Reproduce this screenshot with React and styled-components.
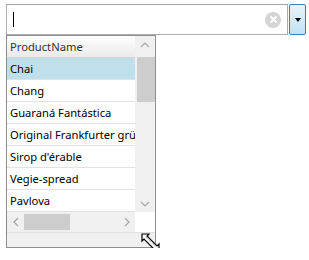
import styled, { createGlobalStyle } from "styled-components"

const Global = createGlobalStyle`
body{
margin:0;
background:#fff;
font-family:"Noto Sans","Open Sans",sans-serif;
}
`

const Page = styled.div`
padding:4px 0 0 6px;
`

const Combo = styled.div`
display:flex;
gap:1px;
height:31px;
width:300px;
`

const Input = styled.div`
flex:1;
box-sizing:border-box;
border:1px solid #abadb3;
border-top-color:#9fa3ab;
background:#fff;
display:flex;
align-items:center;
padding:0 6px;
`

const Caret = styled.span`
width:1px;
height:15px;
background:#000;
`

const Clear = styled.div`
margin-left:auto;
width:16px;
height:16px;
border-radius:50%;
background:#d4d4d4;
display:flex;
align-items:center;
justify-content:center;
`

const DropButton = styled.div`
width:17px;
box-sizing:border-box;
border:1px solid #3c7fb1;
border-radius:2px;
background:linear-gradient(#e6f4fc,#c0e3f7);
display:flex;
align-items:center;
justify-content:center;
`

const Arrow = styled.span`
width:0;
height:0;
border-left:3px solid transparent;
border-right:3px solid transparent;
border-top:4px solid #000;
`

const Panel = styled.div`
position:relative;
width:150px;
box-sizing:border-box;
border:1px solid #8e8e8e;
display:grid;
grid-template-columns:128px 20px;
grid-template-rows:176px 20px 15px;
`

const List = styled.div`
overflow:hidden;
`

const Header = styled.div`
height:22px;
box-sizing:border-box;
border-bottom:1px solid #d5d5d5;
background:linear-gradient(#fff,#eaeaea);
color:#333;
font-size:11.2px;
line-height:22px;
padding-left:3px;
white-space:nowrap;
`

const Row = styled.div`
height:22px;
box-sizing:border-box;
border-bottom:1px solid #e2e2e2;
background:${(p) => (p.selected ? "#bfe0ea" : "#fff")};
color:#000;
font-size:11.2px;
line-height:22px;
padding-left:3px;
white-space:nowrap;
`

const VScroll = styled.div`
background:#f0f0f0;
display:flex;
flex-direction:column;
`

const VArrow = styled.div`
height:17px;
display:flex;
align-items:center;
justify-content:center;
`

const VThumb = styled.div`
margin:4px 0 0 2px;
width:18px;
height:45px;
background:#cdcdcd;
`

const HScroll = styled.div`
background:#f0f0f0;
display:flex;
align-items:stretch;
`

const HArrow = styled.div`
width:17px;
display:flex;
align-items:center;
justify-content:center;
`

const HThumb = styled.div`
width:46px;
margin:2px 0 2px 0;
background:#cdcdcd;
`

const Corner = styled.div`
background:#fff;
`

const Footer = styled.div`
grid-column:1 / 3;
background:#f0f0f0;
border-top:1px solid #e0e0e0;
`

const Grip = styled.svg`
position:absolute;
right:-7px;
bottom:-7px;
`

const Chevron = ({ dir }) => {
  const paths = {
    up: "M1 6 L5 2 L9 6",
    down: "M1 2 L5 6 L9 2",
    left: "M6 1 L2 5 L6 9",
    right: "M2 1 L6 5 L2 9",
  }
  const v = dir === "up" || dir === "down"
  return (
    <svg width={v ? 10 : 8} height={v ? 8 : 10}>
      <path d={paths[dir]} fill="none" stroke="#a6a6a6" strokeWidth="1.2" />
    </svg>
  )
}

const products = [
  "Chai",
  "Chang",
  "Guaraná Fantástica",
  "Original Frankfurter grüne Soße",
  "Sirop d'érable",
  "Vegie-spread",
  "Pavlova",
]

export default function App() {
  return (
    <>
      <Global />
      <Page>
        <Combo>
          <Input>
            <Caret />
            <Clear>
              <svg width="9" height="9">
                <path d="M1.5 1.5 L7.5 7.5 M7.5 1.5 L1.5 7.5" stroke="#fff" strokeWidth="2" />
              </svg>
            </Clear>
          </Input>
          <DropButton>
            <Arrow />
          </DropButton>
        </Combo>
        <Panel>
          <List>
            <Header>ProductName</Header>
            {products.map((p, i) => (
              <Row key={p} selected={i === 0}>{p}</Row>
            ))}
          </List>
          <VScroll>
            <VArrow><Chevron dir="up" /></VArrow>
            <VThumb />
            <div style={{ flex: 1 }} />
            <VArrow><Chevron dir="down" /></VArrow>
          </VScroll>
          <HScroll>
            <HArrow><Chevron dir="left" /></HArrow>
            <HThumb />
            <div style={{ flex: 1 }} />
            <HArrow><Chevron dir="right" /></HArrow>
          </HScroll>
          <Corner />
          <Footer />
          <Grip width="21" height="21" viewBox="0 0 21 21">
            <path d="M1 1 L8 1 L6 3 L16 13 L18 11 L18 18 L11 18 L13 16 L3 6 L1 8 Z" fill="#fff" stroke="#000" strokeWidth="1.2" />
            <path d="M5 4 L15 14" stroke="#888" strokeWidth="1" strokeDasharray="1 1" />
          </Grip>
        </Panel>
      </Page>
    </>
  )
}
